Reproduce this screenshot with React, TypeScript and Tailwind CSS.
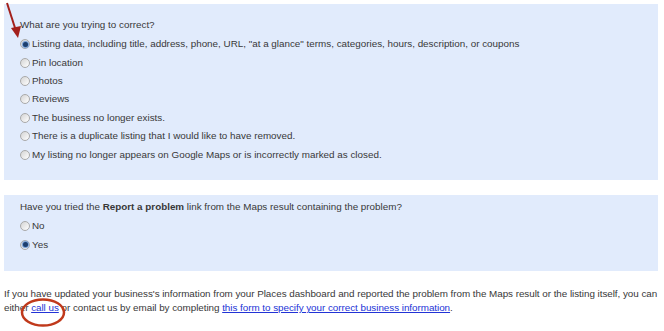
import React from "react";

function Radio({ checked }: { checked?: boolean }) {
  return (
    <span className="relative inline-flex h-[10px] w-[10px] shrink-0 items-center justify-center rounded-full border border-[#a9a9a9] bg-gradient-to-br from-[#d4d4d4] to-[#ffffff]">
      {checked && <span className="h-[5px] w-[5px] rounded-full bg-[#1d3f6e] shadow-[0_0_1px_1px_#6a98d4]" />}
    </span>
  );
}

function Option({ label, checked }: { label: string; checked?: boolean }) {
  return (
    <div className="flex h-[18.4px] items-center gap-[2px]">
      <Radio checked={checked} />
      <span>{label}</span>
    </div>
  );
}

export default function App() {
  const opts = [
    'Listing data, including title, address, phone, URL, "at a glance" terms, categories, hours, description, or coupons',
    "Pin location",
    "Photos",
    "Reviews",
    "The business no longer exists.",
    "There is a duplicate listing that I would like to have removed.",
    "My listing no longer appears on Google Maps or is incorrectly marked as closed.",
  ];
  return (
    <div className="relative h-[331px] w-[664px] overflow-hidden bg-white text-[9.85px] leading-[14px] text-[#383838]" style={{ fontFamily: '"Liberation Sans", Arial, sans-serif' }}>
      <div className="ml-[4px] mr-[6px] mt-[4px] h-[176px] bg-[#e1ebfc] pl-[16px] pt-[14px]">
        <div className="mb-[3px]">What are you trying to correct?</div>
        {opts.map((o, i) => (
          <Option key={i} label={o} checked={i === 0} />
        ))}
      </div>
      <div className="ml-[4px] mr-[6px] mt-[15px] h-[76px] bg-[#e1ebfc] pl-[16px] pt-[5px]">
        <div className="mb-[3px]">
          Have you tried the <b>Report a problem</b> link from the Maps result containing the problem?
        </div>
        <Option label="No" />
        <Option label="Yes" checked />
      </div>
      <p className="ml-[4px] mt-[16px] whitespace-nowrap leading-[14px] tracking-[-0.035px]">
        If you have updated your business's information from your Places dashboard and reported the problem from the Maps result or the listing itself, you can
        <br />
        either <a className="text-[#2233d6] underline">call us</a> or contact us by email by completing{" "}
        <a className="text-[#2233d6] underline">this form to specify your correct business information</a>.
      </p>
      <svg className="pointer-events-none absolute left-0 top-0" width="664" height="331">
        <line x1="7" y1="3" x2="16" y2="31" stroke="#a3201c" strokeWidth="2" />
        <polygon points="11,28 21,26 18,38" fill="#a3201c" />
        <ellipse cx="43" cy="312.5" rx="21" ry="13" fill="none" stroke="#c0391b" strokeWidth="2.5" />
      </svg>
    </div>
  );
}
